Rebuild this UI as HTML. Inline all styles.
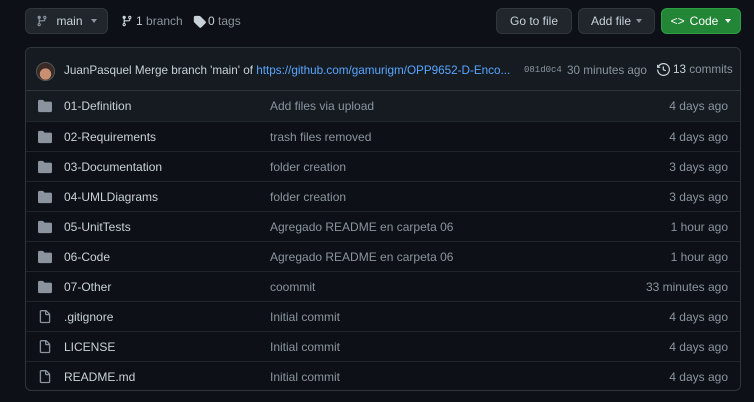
<!DOCTYPE html>
<html><head><meta charset="utf-8"><style>
*{box-sizing:border-box;margin:0;padding:0}
body{width:754px;height:402px;background:#0d1117;font-family:"Liberation Sans",sans-serif;font-size:12px;color:#c9d1d9;position:relative;overflow:hidden}
.btn{position:absolute;top:8px;height:26px;border:1px solid #30363d;border-radius:6px;background:#21262d;color:#c9d1d9;font-size:12px;display:flex;align-items:center;justify-content:center}
.caret{display:inline-block;width:0;height:0;border-left:3.5px solid transparent;border-right:3.5px solid transparent;border-top:4px solid currentColor;margin-left:5px}
.muted{color:#8b949e}
.box{position:absolute;left:25px;top:47px;width:716px;height:344px;border:1px solid #30363d;border-radius:6px;overflow:hidden}
.hdr{height:44px;background:#161b22;border-bottom:1px solid #30363d;position:relative}
.row{height:30px;border-top:1px solid #21262d;position:relative;display:flex;align-items:center}
.row .ic{position:absolute;left:12px;top:8px}
.row .n{position:absolute;left:38px}
.row .m{position:absolute;left:244px;color:#8b949e}
.row .d{position:absolute;right:12px;color:#8b949e}
</style></head><body>
<div class="btn" style="left:25px;width:83px;background:#21262d"><svg width="12" height="12" viewBox="0 0 16 16" style="margin-right:8px"><path fill="#8b949e" d="M11.75 2.5a.75.75 0 100 1.5.75.75 0 000-1.5zm-2.25.75a2.25 2.25 0 113 2.122V6A2.5 2.5 0 0110 8.5H6a1 1 0 00-1 1v1.128a2.251 2.251 0 11-1.5 0V5.372a2.25 2.25 0 111.5 0v1.836A2.492 2.492 0 016 7h4a1 1 0 001-1v-.628A2.25 2.25 0 019.5 3.25zM4.25 12a.75.75 0 100 1.5.75.75 0 000-1.5zM3.5 3.25a.75.75 0 111.5 0 .75.75 0 01-1.5 0z"/></svg>main<span class="caret" style="margin-left:8px;color:#8b949e"></span></div>
<div style="position:absolute;left:121px;top:14px;display:flex;align-items:center"><svg width="12" height="12" viewBox="0 0 16 16"><path fill="#c9d1d9" d="M11.75 2.5a.75.75 0 100 1.5.75.75 0 000-1.5zm-2.25.75a2.25 2.25 0 113 2.122V6A2.5 2.5 0 0110 8.5H6a1 1 0 00-1 1v1.128a2.251 2.251 0 11-1.5 0V5.372a2.25 2.25 0 111.5 0v1.836A2.492 2.492 0 016 7h4a1 1 0 001-1v-.628A2.25 2.25 0 019.5 3.25zM4.25 12a.75.75 0 100 1.5.75.75 0 000-1.5zM3.5 3.25a.75.75 0 111.5 0 .75.75 0 01-1.5 0z"/></svg><b style="font-weight:normal;margin-left:3px">1</b>&nbsp;<span class="muted">branch</span></div>
<div style="position:absolute;left:193px;top:14px;display:flex;align-items:center"><svg width="13" height="13" viewBox="0 0 16 16"><path fill="#c9d1d9" d="M2.5 7.775V2.75a.25.25 0 01.25-.25h5.025a.25.25 0 01.177.073l6.25 6.25a.25.25 0 010 .354l-5.025 5.025a.25.25 0 01-.354 0l-6.25-6.25a.25.25 0 01-.073-.177zm-1.5 0V2.75C1 1.784 1.784 1 2.75 1h5.025c.464 0 .91.184 1.238.513l6.25 6.25a1.750 1.75 0 010 2.474l-5.026 5.026a1.75 1.75 0 01-2.474 0l-6.25-6.25A1.75 1.75 0 011 7.775zM6 5a1 1 0 100 2 1 1 0 000-2z"/></svg><span style="margin-left:2px">0</span>&nbsp;<span class="muted">tags</span></div>
<div class="btn" style="left:496px;width:76px">Go to file</div>
<div class="btn" style="left:578px;width:77px">Add file<span class="caret" style="color:#8b949e"></span></div>
<div class="btn" style="left:661px;width:80px;background:#238636;border-color:#2ea043;color:#fff"><span style="margin-right:5px">&lt;&gt;</span>Code<span class="caret" style="margin-left:7px"></span></div>
<div class="box">
<div class="hdr" style="height:43px">
<div style="position:absolute;left:10px;top:14px;width:19px;height:19px;border-radius:50%;background:radial-gradient(circle at 50% 65%,#c89070 0 40%,#3a2a25 42%);border:1px solid #555"></div>
<div style="position:absolute;left:38px;top:16px;white-space:nowrap;font-size:11.7px">JuanPasquel Merge branch 'main' of <span style="color:#58a6ff">https://github.com/gamurigm/OPP9652-D-Enco...</span></div>
<div style="position:absolute;left:498px;top:17px;font-family:'Liberation Mono',monospace;font-size:9px" class="muted">081d0c4</div>
<div style="position:absolute;left:541px;top:16px;font-size:11.7px" class="muted">30 minutes ago</div>
<div style="position:absolute;left:631px;top:15px;display:flex;align-items:center;font-size:11.7px"><svg width="13" height="13" viewBox="0 0 16 16"><path fill="#c9d1d9" d="M1.643 3.143L.427 1.927A.25.25 0 000 2.104V5.750c0 .138.112.25.25.25h3.646a.25.25 0 00.177-.427L2.715 4.215a6.5 6.5 0 11-1.18 4.458.75.75 0 10-1.493.154 8.001 8.001 0 101.6-5.684zM7.75 4a.75.75 0 01.75.75v2.992l2.028.812a.75.75 0 01-.557 1.392l-2.5-1A.75.75 0 017 8.25v-3.5A.75.75 0 017.75 4z"/></svg><span style="margin-left:3px">13</span>&nbsp;<span class="muted">commits</span></div>
</div>
<div class="row" style="background:#161b22;border-top:none"><svg class="ic" width="14" height="14" viewBox="0 0 16 16"><path fill="#8b949e" d="M1.75 1A1.75 1.75 0 000 2.75v10.5C0 14.216.784 15 1.75 15h12.5A1.75 1.75 0 0016 13.25v-8.5A1.75 1.75 0 0014.25 3H7.5a.25.25 0 01-.2-.1l-.9-1.2C6.07 1.26 5.55 1 5 1H1.75z"/></svg><span class="n">01-Definition</span><span class="m">Add files via upload</span><span class="d">4 days ago</span></div>
<div id="rows"></div>
</div>
<script>
var F='<svg class="ic" width="14" height="14" viewBox="0 0 16 16"><path fill="#8b949e" d="M1.75 1A1.75 1.75 0 000 2.75v10.5C0 14.216.784 15 1.75 15h12.5A1.75 1.75 0 0016 13.25v-8.5A1.75 1.75 0 0014.25 3H7.5a.25.25 0 01-.2-.1l-.9-1.2C6.07 1.26 5.55 1 5 1H1.75z"/></svg>';
var D='<svg class="ic" width="14" height="14" viewBox="0 0 16 16"><path fill="#8b949e" d="M3.75 1.5a.25.25 0 00-.25.25v11.5c0 .138.112.25.25.25h8.5a.25.25 0 00.25-.25V6H9.75A1.75 1.75 0 018 4.25V1.5H3.75zm5.75.56v2.19c0 .138.112.25.25.25h2.19L9.5 2.06zM2 1.75C2 .784 2.784 0 3.75 0h5.086c.464 0 .909.184 1.237.513l3.414 3.414c.329.328.513.773.513 1.237v8.086A1.75 1.75 0 0112.25 15h-8.5A1.75 1.75 0 012 13.25V1.75z"/></svg>';
var r=[[F,'02-Requirements','trash files removed','4 days ago'],[F,'03-Documentation','folder creation','3 days ago'],[F,'04-UMLDiagrams','folder creation','3 days ago'],[F,'05-UnitTests','Agregado README en carpeta 06','1 hour ago'],[F,'06-Code','Agregado README en carpeta 06','1 hour ago'],[F,'07-Other','coommit','33 minutes ago'],[D,'.gitignore','Initial commit','4 days ago'],[D,'LICENSE','Initial commit','4 days ago'],[D,'README.md','Initial commit','4 days ago']];
var h='';r.forEach(function(x){h+='<div class="row">'+x[0]+'<span class="n">'+x[1]+'</span><span class="m">'+x[2]+'</span><span class="d">'+x[3]+'</span></div>'});
document.getElementById('rows').innerHTML=h;
</script>
</body></html>
